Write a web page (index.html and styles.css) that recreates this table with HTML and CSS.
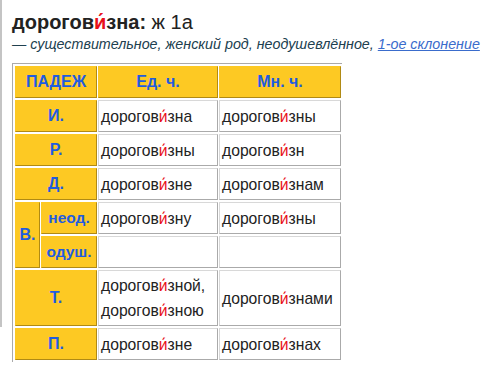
FILE: index.html
```html
<!DOCTYPE html>
<html lang="ru">
<head>
<meta charset="utf-8">
<link rel="stylesheet" href="styles.css">
</head>
<body>
<div class="page">
  <div class="title"><b>дорогов<span class="acc">и́</span>зна:</b> ж 1а</div>
  <div class="desc">— существительное, женский род, неодушевлённое, <a class="link" href="#">1-ое склонение</a></div>
  <table class="decl">
    <colgroup>
      <col class="cv">
      <col class="cs">
      <col class="c2">
      <col class="c3">
    </colgroup>
    <tr>
      <th class="h" colspan="2">ПАДЕЖ</th>
      <th class="h">Ед. ч.</th>
      <th class="h">Мн. ч.</th>
    </tr>
    <tr>
      <th class="h" colspan="2">И.</th>
      <td>дорогов<span class="acc">и́</span>зна</td>
      <td>дорогов<span class="acc">и́</span>зны</td>
    </tr>
    <tr>
      <th class="h" colspan="2">Р.</th>
      <td>дорогов<span class="acc">и́</span>зны</td>
      <td>дорогов<span class="acc">и́</span>зн</td>
    </tr>
    <tr>
      <th class="h" colspan="2">Д.</th>
      <td>дорогов<span class="acc">и́</span>зне</td>
      <td>дорогов<span class="acc">и́</span>знам</td>
    </tr>
    <tr>
      <th class="h" rowspan="2">В.</th>
      <th class="h sm">неод.</th>
      <td>дорогов<span class="acc">и́</span>зну</td>
      <td>дорогов<span class="acc">и́</span>зны</td>
    </tr>
    <tr>
      <th class="h sm">одуш.</th>
      <td></td>
      <td></td>
    </tr>
    <tr class="tall">
      <th class="h" colspan="2">Т.</th>
      <td>дорогов<span class="acc">и́</span>зной,<br>дорогов<span class="acc">и́</span>зною</td>
      <td>дорогов<span class="acc">и́</span>знами</td>
    </tr>
    <tr>
      <th class="h" colspan="2">П.</th>
      <td>дорогов<span class="acc">и́</span>зне</td>
      <td>дорогов<span class="acc">и́</span>знах</td>
    </tr>
  </table>
</div>
</body>
</html>
```

FILE: styles.css
```css
html, body {
  margin: 0;
  padding: 0;
}
body {
  font-family: "Liberation Sans", Arial, sans-serif;
  color: #222;
  background: #fff linear-gradient(#c4c4c4, #c4c4c4) 0 0 / 2px 327px no-repeat;
}
.page {
  padding: 10px 0 0 12px;
}
.title {
  font-size: 20px;
  line-height: 24px;
  color: #222;
}
.acc {
  color: #e8101a;
}
.desc {
  font-size: 14.3px;
  line-height: 20px;
  font-style: italic;
  color: #20404f;
}
.link {
  color: #3a6ccc;
  text-decoration: underline;
}
.decl {
  margin-top: 9px;
  border-collapse: separate;
  border-spacing: 1px 2px;
  table-layout: fixed;
  border-top: 1px solid #aaa;
  border-left: 1px solid #aaa;
  padding-left: 1px;
}
col.cv { width: 25px; }
col.cs { width: 56px; }
col.c2 { width: 120px; }
col.c3 { width: 122px; }
.decl th, .decl td {
  padding: 0 2px;
  box-sizing: border-box;
}
.decl tr {
  height: 32px;
}
.decl tr.tall {
  height: 56px;
}
.h {
  background: #fdc923;
  border: 1px solid #fdc923;
  border-right-color: #b08a14;
  border-bottom-color: #b08a14;
  color: #1f5ce0;
  font-weight: bold;
  font-size: 16px;
  text-align: center;
}
.h.sm {
  font-size: 15.5px;
}
.decl td {
  background: #fff;
  border: 1px solid #d8d8d8;
  border-right-color: #aaa;
  border-bottom-color: #aaa;
  font-size: 15.7px;
  line-height: 25px;
  text-align: left;
  vertical-align: middle;
  color: #222;
  white-space: nowrap;
}
```
